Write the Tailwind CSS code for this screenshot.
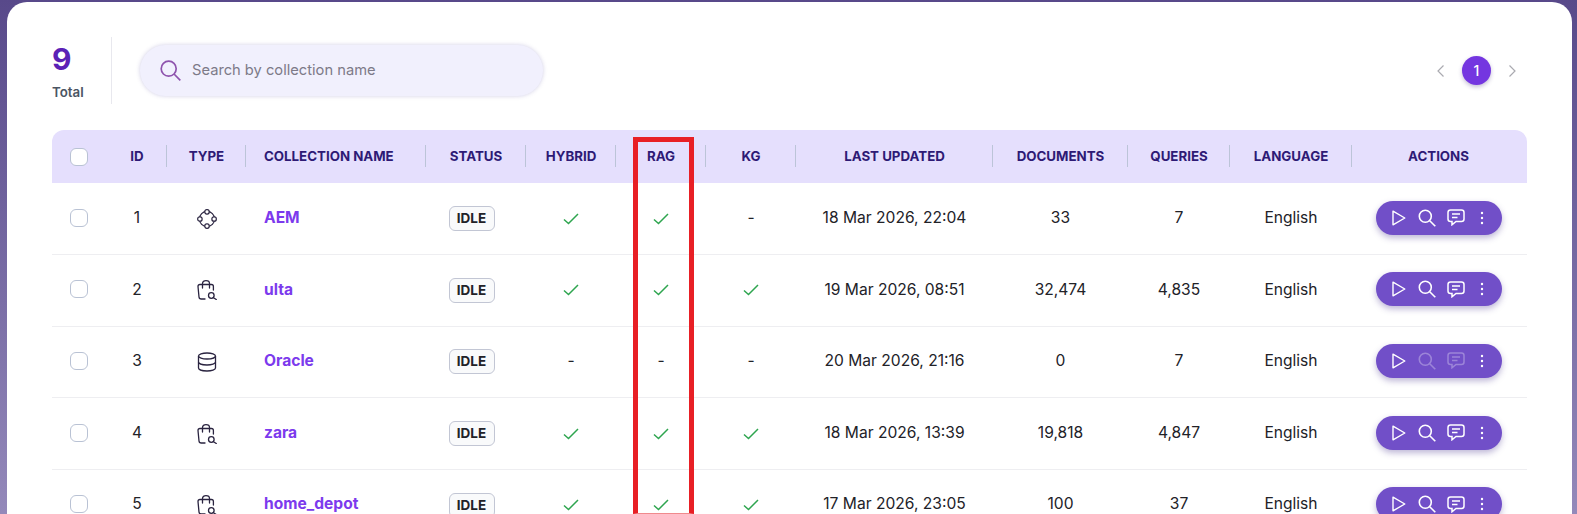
<!DOCTYPE html>
<html lang="en">
<head>
    <meta charset="UTF-8">
    <meta name="viewport" content="width=device-width, initial-scale=1.0">
    <title>Collections</title>
    <script src="https://cdn.jsdelivr.net/npm/@tailwindcss/browser@4"></script>
</head>
<body class="h-[514px] overflow-hidden bg-linear-to-b from-[#58498a] to-[#9489ba] pt-[2px] pl-[7px] pr-[5px] font-['Inter',sans-serif]">
    <svg class="hidden">
        <symbol id="check" viewBox="0 0 16 12"><path d="M1 6.5 5.5 10.5 15 1" fill="none" stroke="currentColor" stroke-width="1.5"/></symbol>
        <symbol id="nodes" viewBox="0 0 20 20" fill="none" stroke="currentColor" stroke-width="1.2"><circle cx="10" cy="10" r="7.6"/><rect x="7.800" y="0.700" width="4.400" height="4.400" rx="2" fill="#fff"/><rect x="7.800" y="14.900" width="4.400" height="4.400" rx="2" fill="#fff"/><rect x="0.700" y="7.800" width="4.400" height="4.400" rx="2" fill="#fff"/><rect x="14.900" y="7.800" width="4.400" height="4.400" rx="2" fill="#fff"/></symbol>
        <symbol id="bag" viewBox="0 0 20 20" fill="none" stroke="currentColor" stroke-width="1.3" stroke-linecap="round"><path d="M8 19H4.200C2.900 19 2.100 18 2 17L1 6.500C1 5.200 1.800 4.500 3 4.500H14.500C15.600 4.500 16.400 5.300 16.400 6.500V10"/><path d="M5.500 8V3.500C5.500 1.500 7 .7 9 .7S12.500 1.500 12.500 3.500V8"/><circle cx="14.300" cy="15.500" r="2.800"/><path d="M16.500 17.700 19.300 19.500"/></symbol>
        <symbol id="db" viewBox="0 0 20 20" fill="none" stroke="currentColor" stroke-width="1.300"><ellipse cx="10" cy="4" rx="8.500" ry="3"/><path d="M1.500 4V16C1.500 17.700 5.300 19 10 19S18.500 17.700 18.500 16V4"/><path d="M1.500 10C1.500 11.700 5.300 13 10 13S18.500 11.700 18.500 10"/></symbol>
        <symbol id="play" viewBox="0 0 14 16"><path d="M1 1.200V14.800L12.800 8Z" fill="none" stroke="currentColor" stroke-width="1.400" stroke-linejoin="round"/></symbol>
        <symbol id="find" viewBox="0 0 18 18" fill="none" stroke="currentColor" stroke-width="1.600"><circle cx="7.300" cy="7.300" r="6"/><path d="M11.700 11.700 17.300 17.300"/></symbol>
        <symbol id="chat" viewBox="0 0 18 17" fill="none" stroke="currentColor" stroke-width="1.500"><path d="M3.500 1H14.500C16 1 17 2 17 3.500V10C17 11.500 16 12.500 14.500 12.500H9L5 15.800V12.500H3.500C2 12.500 1 11.500 1 10V3.500C1 2 2 1 3.500 1Z"/><path d="M5 5H13M5 8.500H10.500"/></symbol>
    </svg>

    <div class="h-[600px] rounded-t-[20px] bg-white px-[45px]">
        <div class="flex h-[128px] items-center pt-[9px]">
            <div class="flex h-[67px] w-[60px] flex-col border-r border-[#e8e8ee]">
                <span class="mt-[6px] text-[30px] leading-[32px] font-bold text-[#5b21b6]">9</span>
                <span class="mt-[9px] text-[13.300px] leading-[16px] font-semibold text-[#4b5563]">Total</span>
            </div>
            <div class="ml-[28px] flex h-[51px] w-[403px] items-center rounded-full bg-[#f1f0fd] pl-[20px] shadow-[0_0_4px_rgba(90,80,160,0.28)]">
                <svg class="h-[21px] w-[21px] text-[#8e53ad]" viewBox="0 0 21 21" fill="none" stroke="currentColor" stroke-width="1.700"><circle cx="8.700" cy="8.700" r="7.500"/><path d="M14 14 20.300 20.300"/></svg>
                <span class="ml-[11px] text-[14.700px] text-[#7d7a88]">Search by collection name</span>
            </div>
            <div class="ml-auto mr-[11px] flex items-center">
                <svg class="h-[12px] w-[7px] text-[#aaaab0]" viewBox="0 0 7 12" fill="none" stroke="currentColor" stroke-width="1.200"><path d="M6.500 .5 1 6 6.500 11.500"/></svg>
                <span class="mx-[18px] flex h-[29px] w-[29px] items-center justify-center rounded-full bg-[#7436e0] text-[14px] font-medium text-white shadow-[0_2px_4px_rgba(60,40,120,0.3)]">1</span>
                <svg class="h-[12px] w-[7px] text-[#aaaab0]" viewBox="0 0 7 12" fill="none" stroke="currentColor" stroke-width="1.200"><path d="M.5 .5 6 6 .5 11.500"/></svg>
            </div>
        </div>

        <table class="w-[1475px] table-fixed border-collapse text-center text-[15.600px] text-[#222228]">
            <colgroup>
                <col class="w-[57px]"><col class="w-[58px]"><col class="w-[79px]"><col class="w-[180px]"><col class="w-[100px]"><col class="w-[90px]"><col class="w-[90px]"><col class="w-[90px]"><col class="w-[197px]"><col class="w-[135px]"><col class="w-[102px]"><col class="w-[122px]"><col class="w-[175px]">
            </colgroup>
            <thead class="bg-[#e5dffd] text-[13.300px] font-bold text-[#2e1a75] [&_th]:relative [&_th]:h-[53px] [&_th]:font-bold">
                <tr>
                    <th class="rounded-tl-[12px] pr-[4px]"><span class="mx-auto block h-[18px] w-[18px] rounded-[6px] border border-[#b9c2d4] bg-white"></span></th>
                    <th class="pr-[2px] after:absolute after:top-[15px] after:right-0 after:h-[22px] after:w-px after:bg-[#bcc4d8]">ID</th>
                    <th class="after:absolute after:top-[15px] after:right-0 after:h-[22px] after:w-px after:bg-[#bcc4d8]">TYPE</th>
                    <th class="pl-[18px] text-left after:absolute after:top-[15px] after:right-0 after:h-[22px] after:w-px after:bg-[#bcc4d8]">COLLECTION NAME</th>
                    <th class="after:absolute after:top-[15px] after:right-0 after:h-[22px] after:w-px after:bg-[#bcc4d8]">STATUS</th>
                    <th class="after:absolute after:top-[15px] after:right-0 after:h-[22px] after:w-px after:bg-[#bcc4d8]">HYBRID</th>
                    <th class="after:absolute after:top-[15px] after:right-0 after:h-[22px] after:w-px after:bg-[#bcc4d8]">RAG</th>
                    <th class="after:absolute after:top-[15px] after:right-0 after:h-[22px] after:w-px after:bg-[#bcc4d8]">KG</th>
                    <th class="after:absolute after:top-[15px] after:right-0 after:h-[22px] after:w-px after:bg-[#bcc4d8]">LAST UPDATED</th>
                    <th class="after:absolute after:top-[15px] after:right-0 after:h-[22px] after:w-px after:bg-[#bcc4d8]">DOCUMENTS</th>
                    <th class="after:absolute after:top-[15px] after:right-0 after:h-[22px] after:w-px after:bg-[#bcc4d8]">QUERIES</th>
                    <th class="after:absolute after:top-[15px] after:right-0 after:h-[22px] after:w-px after:bg-[#bcc4d8]">LANGUAGE</th>
                    <th class="rounded-tr-[12px] pr-[2px]">ACTIONS</th>
                </tr>
            </thead>
            <tbody class="[&_td]:pb-[2px] [&_td>svg]:translate-y-px [&_tr]:h-[71.600px] [&_tr]:border-b [&_tr]:border-[#eeeef1]">
                <tr>
                    <td class="pr-[4px]"><span class="mx-auto block h-[18px] w-[18px] rounded-[6px] border border-[#b9c2d4]"></span></td>
                    <td class="pr-[2px]">1</td>
                    <td><svg class="mx-auto h-[20px] w-[20px] text-[#2a2440]"><use href="#nodes"/></svg></td>
                    <td class="pl-[18px] text-left font-bold text-[#7c3aed]">AEM</td>
                    <td class="pr-[9px]"><span class="inline-block h-[25px] w-[46px] translate-y-px rounded-[6px] border border-[#c2c6d4] bg-[#f9fafb] text-[13.500px] leading-[23px] font-bold">IDLE</span></td>
                    <td class="text-[#2ea54f]"><svg class="mx-auto h-[12px] w-[16px]"><use href="#check"/></svg></td>
                    <td class="text-[#2ea54f]"><svg class="mx-auto h-[12px] w-[16px]"><use href="#check"/></svg></td>
                    <td>-</td>
                    <td>18 Mar 2026, 22:04</td>
                    <td>33</td>
                    <td>7</td>
                    <td>English</td>
                    <td class="pr-[2px]"><div class="mx-auto flex h-[34px] w-[126px] items-center rounded-full bg-[#714fc8] pl-[16px] text-white shadow-[0_3px_6px_rgba(70,50,140,0.35)]"><svg class="h-[16px] w-[14px]"><use href="#play"/></svg><svg class="ml-[12px] h-[18px] w-[18px]"><use href="#find"/></svg><svg class="ml-[11px] h-[17px] w-[18px]"><use href="#chat"/></svg><svg class="ml-[15px] h-[14px] w-[4px]" viewBox="0 0 4 14" fill="currentColor"><circle cx="2" cy="2" r="1.200"/><circle cx="2" cy="7" r="1.200"/><circle cx="2" cy="12" r="1.200"/></svg></div></td>
                </tr>
                <tr>
                    <td class="pr-[4px]"><span class="mx-auto block h-[18px] w-[18px] rounded-[6px] border border-[#b9c2d4]"></span></td>
                    <td class="pr-[2px]">2</td>
                    <td><svg class="mx-auto h-[20px] w-[20px] text-[#2a2440]"><use href="#bag"/></svg></td>
                    <td class="pl-[18px] text-left font-bold text-[#7c3aed]">ulta</td>
                    <td class="pr-[9px]"><span class="inline-block h-[25px] w-[46px] translate-y-px rounded-[6px] border border-[#c2c6d4] bg-[#f9fafb] text-[13.500px] leading-[23px] font-bold">IDLE</span></td>
                    <td class="text-[#2ea54f]"><svg class="mx-auto h-[12px] w-[16px]"><use href="#check"/></svg></td>
                    <td class="text-[#2ea54f]"><svg class="mx-auto h-[12px] w-[16px]"><use href="#check"/></svg></td>
                    <td class="text-[#2ea54f]"><svg class="mx-auto h-[12px] w-[16px]"><use href="#check"/></svg></td>
                    <td>19 Mar 2026, 08:51</td>
                    <td>32,474</td>
                    <td>4,835</td>
                    <td>English</td>
                    <td class="pr-[2px]"><div class="mx-auto flex h-[34px] w-[126px] items-center rounded-full bg-[#714fc8] pl-[16px] text-white shadow-[0_3px_6px_rgba(70,50,140,0.35)]"><svg class="h-[16px] w-[14px]"><use href="#play"/></svg><svg class="ml-[12px] h-[18px] w-[18px]"><use href="#find"/></svg><svg class="ml-[11px] h-[17px] w-[18px]"><use href="#chat"/></svg><svg class="ml-[15px] h-[14px] w-[4px]" viewBox="0 0 4 14" fill="currentColor"><circle cx="2" cy="2" r="1.200"/><circle cx="2" cy="7" r="1.200"/><circle cx="2" cy="12" r="1.200"/></svg></div></td>
                </tr>
                <tr>
                    <td class="pr-[4px]"><span class="mx-auto block h-[18px] w-[18px] rounded-[6px] border border-[#b9c2d4]"></span></td>
                    <td class="pr-[2px]">3</td>
                    <td><svg class="mx-auto h-[20px] w-[20px] text-[#2a2440]"><use href="#db"/></svg></td>
                    <td class="pl-[18px] text-left font-bold text-[#7c3aed]">Oracle</td>
                    <td class="pr-[9px]"><span class="inline-block h-[25px] w-[46px] translate-y-px rounded-[6px] border border-[#c2c6d4] bg-[#f9fafb] text-[13.500px] leading-[23px] font-bold">IDLE</span></td>
                    <td>-</td>
                    <td>-</td>
                    <td>-</td>
                    <td>20 Mar 2026, 21:16</td>
                    <td>0</td>
                    <td>7</td>
                    <td>English</td>
                    <td class="pr-[2px]"><div class="mx-auto flex h-[34px] w-[126px] items-center rounded-full bg-[#714fc8] pl-[16px] text-white shadow-[0_3px_6px_rgba(70,50,140,0.35)]"><svg class="h-[16px] w-[14px]"><use href="#play"/></svg><svg class="ml-[12px] h-[18px] w-[18px] opacity-30"><use href="#find"/></svg><svg class="ml-[11px] h-[17px] w-[18px] opacity-30"><use href="#chat"/></svg><svg class="ml-[15px] h-[14px] w-[4px]" viewBox="0 0 4 14" fill="currentColor"><circle cx="2" cy="2" r="1.200"/><circle cx="2" cy="7" r="1.200"/><circle cx="2" cy="12" r="1.200"/></svg></div></td>
                </tr>
                <tr>
                    <td class="pr-[4px]"><span class="mx-auto block h-[18px] w-[18px] rounded-[6px] border border-[#b9c2d4]"></span></td>
                    <td class="pr-[2px]">4</td>
                    <td><svg class="mx-auto h-[20px] w-[20px] text-[#2a2440]"><use href="#bag"/></svg></td>
                    <td class="pl-[18px] text-left font-bold text-[#7c3aed]">zara</td>
                    <td class="pr-[9px]"><span class="inline-block h-[25px] w-[46px] translate-y-px rounded-[6px] border border-[#c2c6d4] bg-[#f9fafb] text-[13.500px] leading-[23px] font-bold">IDLE</span></td>
                    <td class="text-[#2ea54f]"><svg class="mx-auto h-[12px] w-[16px]"><use href="#check"/></svg></td>
                    <td class="text-[#2ea54f]"><svg class="mx-auto h-[12px] w-[16px]"><use href="#check"/></svg></td>
                    <td class="text-[#2ea54f]"><svg class="mx-auto h-[12px] w-[16px]"><use href="#check"/></svg></td>
                    <td>18 Mar 2026, 13:39</td>
                    <td>19,818</td>
                    <td>4,847</td>
                    <td>English</td>
                    <td class="pr-[2px]"><div class="mx-auto flex h-[34px] w-[126px] items-center rounded-full bg-[#714fc8] pl-[16px] text-white shadow-[0_3px_6px_rgba(70,50,140,0.35)]"><svg class="h-[16px] w-[14px]"><use href="#play"/></svg><svg class="ml-[12px] h-[18px] w-[18px]"><use href="#find"/></svg><svg class="ml-[11px] h-[17px] w-[18px]"><use href="#chat"/></svg><svg class="ml-[15px] h-[14px] w-[4px]" viewBox="0 0 4 14" fill="currentColor"><circle cx="2" cy="2" r="1.200"/><circle cx="2" cy="7" r="1.200"/><circle cx="2" cy="12" r="1.200"/></svg></div></td>
                </tr>
                <tr>
                    <td class="pr-[4px]"><span class="mx-auto block h-[18px] w-[18px] rounded-[6px] border border-[#b9c2d4]"></span></td>
                    <td class="pr-[2px]">5</td>
                    <td><svg class="mx-auto h-[20px] w-[20px] text-[#2a2440]"><use href="#bag"/></svg></td>
                    <td class="pl-[18px] text-left font-bold text-[#7c3aed]">home_depot</td>
                    <td class="pr-[9px]"><span class="inline-block h-[25px] w-[46px] translate-y-px rounded-[6px] border border-[#c2c6d4] bg-[#f9fafb] text-[13.500px] leading-[23px] font-bold">IDLE</span></td>
                    <td class="text-[#2ea54f]"><svg class="mx-auto h-[12px] w-[16px]"><use href="#check"/></svg></td>
                    <td class="text-[#2ea54f]"><svg class="mx-auto h-[12px] w-[16px]"><use href="#check"/></svg></td>
                    <td class="text-[#2ea54f]"><svg class="mx-auto h-[12px] w-[16px]"><use href="#check"/></svg></td>
                    <td>17 Mar 2026, 23:05</td>
                    <td>100</td>
                    <td>37</td>
                    <td>English</td>
                    <td class="pr-[2px]"><div class="mx-auto flex h-[34px] w-[126px] items-center rounded-full bg-[#714fc8] pl-[16px] text-white shadow-[0_3px_6px_rgba(70,50,140,0.35)]"><svg class="h-[16px] w-[14px]"><use href="#play"/></svg><svg class="ml-[12px] h-[18px] w-[18px]"><use href="#find"/></svg><svg class="ml-[11px] h-[17px] w-[18px]"><use href="#chat"/></svg><svg class="ml-[15px] h-[14px] w-[4px]" viewBox="0 0 4 14" fill="currentColor"><circle cx="2" cy="2" r="1.200"/><circle cx="2" cy="7" r="1.200"/><circle cx="2" cy="12" r="1.200"/></svg></div></td>
                </tr>
            </tbody>
        </table>
    </div>

    <!-- annotation drawn over the screenshot -->
    <div class="absolute top-[137px] left-[633px] h-[377px] w-[61px] border-x-[5px] border-t-[5px] border-b border-[#e81f25] border-b-[#f08a8d]"></div>
</body>
</html>
